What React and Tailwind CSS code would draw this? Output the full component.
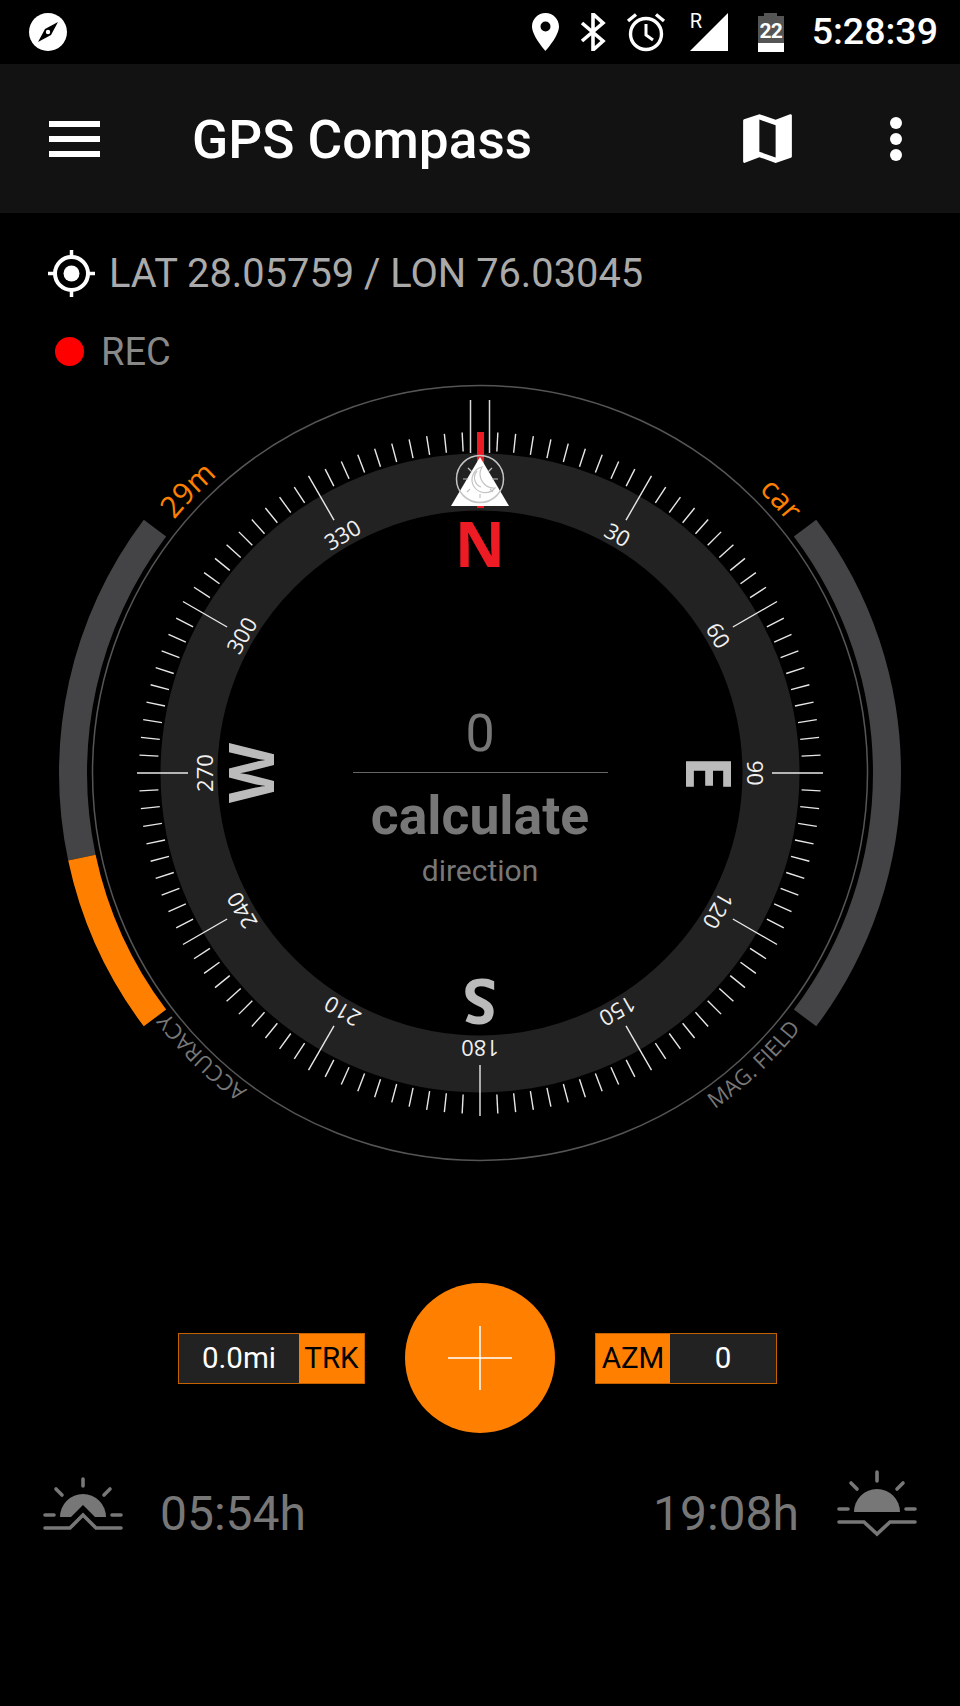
import React from 'react';

const CX = 480;
const CY = 403;

function polar(r, deg) {
  const a = ((deg - 90) * Math.PI) / 180;
  return [CX + r * Math.cos(a), CY + r * Math.sin(a)];
}

function bandPath(r1, r2, from, to) {
  const [ax, ay] = polar(r2, from);
  const [bx, by] = polar(r2, to);
  const [cx, cy] = polar(r1, to);
  const [dx, dy] = polar(r1, from);
  return `M${ax} ${ay}A${r2} ${r2} 0 0 1 ${bx} ${by}L${cx} ${cy}A${r1} ${r1} 0 0 0 ${dx} ${dy}Z`;
}

function arcPath(r, from, to, clockwise) {
  const [ax, ay] = polar(r, from);
  const [bx, by] = polar(r, to);
  return `M${ax} ${ay}A${r} ${r} 0 0 ${clockwise ? 1 : 0} ${bx} ${by}`;
}

const DEGREES = Array.from({ length: 120 }, (_, i) => i * 3);
const LABELS = [30, 60, 90, 120, 150, 180, 210, 240, 270, 300, 330];
const CARDINALS = [
  { text: 'N', deg: 0, fill: '#ed1c24' },
  { text: 'E', deg: 90, fill: '#bbbbbb' },
  { text: 'S', deg: 180, fill: '#bbbbbb' },
  { text: 'W', deg: 270, fill: '#bbbbbb' },
];

function Ticks() {
  return (
    <g stroke="#e8e8e8" strokeWidth="1.4">
      {DEGREES.filter((d) => d !== 0).map((d) => {
        const major = d % 30 === 0;
        const [x1, y1] = polar(major ? 292 : 322, d);
        const [x2, y2] = polar(major ? 343 : 341, d);
        return <line key={d} x1={x1} y1={y1} x2={x2} y2={y2} />;
      })}
    </g>
  );
}

function Marker() {
  return (
    <g>
      <rect x="477" y="62" width="7" height="76" fill="#ed1c24" />
      <line x1="470.5" y1="30" x2="470.5" y2="83" stroke="#d8d8d8" strokeWidth="1.5" />
      <line x1="489.5" y1="30" x2="489.5" y2="83" stroke="#d8d8d8" strokeWidth="1.5" />
      <path d="M480 87L509 136H451Z" fill="#ffffff" />
      <g fill="none" stroke="#c4c4c4" strokeWidth="1.2">
        <circle cx="480" cy="109" r="23.5" strokeWidth="1.5" />
        <path d="M482 97A13 13 0 1 0 495 118A14 14 0 0 1 482 97Z" />
        <path d="M477 101A10 10 0 0 0 481 117" />
        <path d="M468 98l4 4M492 98l-4 4M463 109h5M492 109h6M480 124v4M470 119l-3 3M490 119l3 3" />
      </g>
    </g>
  );
}

function Compass() {
  return (
    <svg width="960" height="810" viewBox="0 0 960 810" className="block">
      <defs>
        <path id="cw-left" d={arcPath(397, 300, 330, true)} />
        <path id="cw-right" d={arcPath(397, 30, 60, true)} />
        <path id="cw-accuracy" d={arcPath(393, 195, 255, true)} />
        <path id="ccw-mag" d={arcPath(410, 165, 105, false)} />
      </defs>

      <path d={bandPath(393, 421, 53, 127)} fill="#444446" />
      <path d={bandPath(393, 421, 258, 307)} fill="#444446" />
      <path d={bandPath(393, 421, 233, 258)} fill="#ff8000" />
      <circle cx={CX} cy={CY} r="387.5" fill="none" stroke="#555555" strokeWidth="1.5" />
      <circle cx={CX} cy={CY} r="291" fill="none" stroke="#222222" strokeWidth="57" />

      <Ticks />

      <g fontFamily="'Open Sans', sans-serif" fontSize="22" fill="#f0f0f0" textAnchor="middle">
        {LABELS.map((d) => {
          const [x, y] = polar(275, d);
          return (
            <text key={d} x={x} y={y + 8} transform={`rotate(${d} ${x} ${y})`}>
              {d}
            </text>
          );
        })}
      </g>

      <g fontFamily="'Open Sans', sans-serif" fontSize="62" fontWeight="700" textAnchor="middle">
        {CARDINALS.map((c) => {
          const [x, y] = polar(228, c.deg);
          return (
            <text key={c.text} x={x} y={y + 22} fill={c.fill} transform={`rotate(${c.deg} ${x} ${y})`}>
              {c.text}
            </text>
          );
        })}
      </g>

      <g fontFamily="'Open Sans', sans-serif" textAnchor="middle">
        <text fontSize="30" fill="#ff8000">
          <textPath href="#cw-left" startOffset="47%">29m</textPath>
        </text>
        <text fontSize="30" fill="#ff8000">
          <textPath href="#cw-right" startOffset="59%">car</textPath>
        </text>
        <text fontSize="22" fill="#777777">
          <textPath href="#cw-accuracy" startOffset="49%">ACCURACY</textPath>
        </text>
        <text fontSize="22" fill="#777777">
          <textPath href="#ccw-mag" startOffset="47%">MAG. FIELD</textPath>
        </text>
      </g>

      <Marker />

      <g fontFamily="Roboto, sans-serif" fill="#777777" textAnchor="middle">
        <text x="480" y="381" fontSize="52">0</text>
        <line x1="353" y1="402.5" x2="608" y2="402.5" stroke="#666666" strokeWidth="1" />
        <text x="480" y="464" fontSize="53.5" fontWeight="700">calculate</text>
        <text x="480" y="511" fontSize="30">direction</text>
      </g>
    </svg>
  );
}

function StatusBar() {
  return (
    <div className="flex h-16 items-center bg-black pl-[29px] pr-[22px] text-white">
      <svg width="38" height="38" viewBox="0 0 38 38">
        <circle cx="19" cy="19" r="19" fill="#fff" />
        <path d="M29 9L22 22L9 29L16 16Z" fill="#000" />
        <circle cx="19" cy="19" r="2.2" fill="#fff" />
      </svg>
      <div className="ml-auto flex items-center">
        <svg width="27" height="38" viewBox="0 0 27 38">
          <path
            d="M13.5 0C6 0 0 6 0 13.5C0 23 13.5 38 13.5 38S27 23 27 13.5C27 6 21 0 13.5 0ZM13.5 18.5a5 5 0 1 1 0-10a5 5 0 0 1 0 10Z"
            fill="#fff"
          />
        </svg>
        <svg width="26" height="38" viewBox="0 0 26 38" className="ml-[21px]">
          <path d="M2 10L23 28L13 37V1L23 10L2 28" fill="none" stroke="#fff" strokeWidth="3.6" />
        </svg>
        <svg width="40" height="40" viewBox="0 0 40 40" className="ml-[20px]">
          <circle cx="20" cy="22" r="15.5" fill="none" stroke="#fff" strokeWidth="3.4" />
          <path d="M20 12V23L27 28" fill="none" stroke="#fff" strokeWidth="3" />
          <path d="M2 9L10 2.5M38 9L30 2.5" stroke="#fff" strokeWidth="3.4" />
        </svg>
        <div className="relative ml-[24px] h-[38px] w-[38px]">
          <svg width="38" height="38" viewBox="0 0 38 38" className="absolute inset-0">
            <path d="M38 0V38H0Z" fill="#fff" />
          </svg>
          <span className="absolute left-0 top-[-2px] font-['Roboto',sans-serif] text-[20px] leading-[20px]">
            R
          </span>
        </div>
        <div className="relative ml-[30px] flex h-[39px] w-[26px] flex-col">
          <div className="mx-auto h-[3px] w-[13px] bg-[#555]" />
          <div className="flex-1 bg-[#555]" />
          <div className="h-[9px] bg-white" />
          <span className="absolute inset-x-0 top-[7px] text-center font-['Roboto',sans-serif] text-[21px] font-bold leading-[22px] tracking-[-1px]">
            22
          </span>
        </div>
        <span className="ml-[28px] font-['Roboto',sans-serif] text-[37.5px] font-medium leading-none">5:28:39</span>
      </div>
    </div>
  );
}

function AppBar() {
  return (
    <div className="flex h-[149px] items-center bg-[#121212] text-white">
      <div className="ml-[49px] flex w-[51px] flex-col gap-[9px]">
        <div className="h-[6px] bg-white" />
        <div className="h-[6px] bg-white" />
        <div className="h-[6px] bg-white" />
      </div>
      <span className="ml-[92px] mt-[4px] font-['Roboto',sans-serif] text-[53.2px] font-medium leading-none">
        GPS Compass
      </span>
      <svg width="65" height="65" viewBox="0 0 24 24" className="ml-auto" fill="#fff">
        <path d="M20.5 3l-.16.03L15 5.1 9 3 3.36 4.9c-.21.07-.36.25-.36.48V20.5c0 .28.22.5.5.5l.16-.03L9 18.9l6 2.1 5.64-1.9c.21-.07.36-.25.36-.48V3.5c0-.28-.22-.5-.5-.5zM15 19l-6-2.11V5l6 2.11V19z" />
      </svg>
      <div className="ml-[90px] mr-[58px] flex flex-col gap-[4px]">
        <div className="h-[12px] w-[12px] rounded-full bg-white" />
        <div className="h-[12px] w-[12px] rounded-full bg-white" />
        <div className="h-[12px] w-[12px] rounded-full bg-white" />
      </div>
    </div>
  );
}

function Info() {
  return (
    <div className="font-['Roboto',sans-serif]">
      <div className="flex h-[48px] items-center pl-[48px]">
        <svg width="47" height="47" viewBox="0 0 47 47">
          <circle cx="23.5" cy="23.5" r="16.5" fill="none" stroke="#fff" strokeWidth="4" />
          <circle cx="23.5" cy="23.5" r="8" fill="#fff" />
          <path d="M23.5 0V7M23.5 40V47M0 23.5H7M40 23.5H47" stroke="#fff" strokeWidth="3.5" />
        </svg>
        <span className="ml-[14px] mt-[2px] text-[39.8px] leading-none text-[#aaaaaa]">LAT 28.05759 / LON 76.03045</span>
      </div>
      <div className="mt-[40px] flex h-[29px] items-center pl-[55px]">
        <div className="h-[29px] w-[29px] rounded-full bg-[#ff0000]" />
        <span className="ml-[17px] text-[38px] leading-none text-[#888888]">REC</span>
      </div>
    </div>
  );
}

function Stat({ label, value, reverse }) {
  return (
    <div className={`flex h-[51px] border border-[#c46200] font-['Roboto',sans-serif] text-[29.5px] ${reverse ? 'flex-row-reverse w-[182px]' : 'w-[187px]'}`}>
      <div className="flex flex-1 items-center justify-center bg-[#222222] text-white">{value}</div>
      <div className={`flex items-center justify-center bg-[#ff8000] text-black ${reverse ? 'w-[74px]' : 'w-[65px]'}`}>{label}</div>
    </div>
  );
}

function Controls() {
  return (
    <div className="flex items-center">
      <div className="ml-[178px]">
        <Stat label="TRK" value="0.0mi" />
      </div>
      <div className="relative ml-[40px] flex h-[150px] w-[150px] items-center justify-center rounded-full bg-[#ff8000]">
        <svg width="64" height="64" viewBox="0 0 64 64">
          <path d="M32 0V64M0 32H64" stroke="#fff" strokeWidth="1.5" />
        </svg>
      </div>
      <div className="ml-[40px]">
        <Stat label="AZM" value="0" reverse />
      </div>
    </div>
  );
}

function SunriseIcon() {
  return (
    <svg width="80" height="54" viewBox="0 0 80 54" fill="none" stroke="#777777" strokeWidth="3.6" strokeLinecap="round">
      <path d="M17 40a23 23 0 0 1 46 0Z" fill="#777777" stroke="none" />
      <path d="M40 28L53 41H27Z" fill="#000000" stroke="none" />
      <path d="M40 2V9M13 12L19 18M67 12L61 18M2 38H11M69 38H78" />
      <path d="M2 51H27L40 38L53 51H78" />
    </svg>
  );
}

function SunsetIcon() {
  return (
    <svg width="80" height="68" viewBox="0 0 80 68" fill="none" stroke="#777777" strokeWidth="3.6" strokeLinecap="round">
      <path d="M17 42a23 23 0 0 1 46 0Z" fill="#777777" stroke="none" />
      <path d="M40 2V11M14 13L20 19M66 13L60 19M2 39H11M69 39H78" />
      <path d="M2 52H27L40 64L53 52H78" />
    </svg>
  );
}

function SunTimes() {
  return (
    <div className="flex items-end pl-[43px] pr-[43px] font-['Roboto',sans-serif] text-[48px] leading-none text-[#777777]">
      <div className="mb-[7px]">
        <SunriseIcon />
      </div>
      <span className="ml-[37px]">05:54h</span>
      <span className="ml-auto">19:08h</span>
      <div className="ml-[38px]">
        <SunsetIcon />
      </div>
    </div>
  );
}

export default function App() {
  return (
    <div className="h-[1706px] w-[960px] overflow-hidden bg-black">
      <StatusBar />
      <AppBar />
      <div className="pt-[36px]">
        <Info />
      </div>
      <div className="mt-[4px]">
        <Compass />
      </div>
      <div className="mt-[103px]">
        <Controls />
      </div>
      <div className="mt-[37px]">
        <SunTimes />
      </div>
    </div>
  );
}
